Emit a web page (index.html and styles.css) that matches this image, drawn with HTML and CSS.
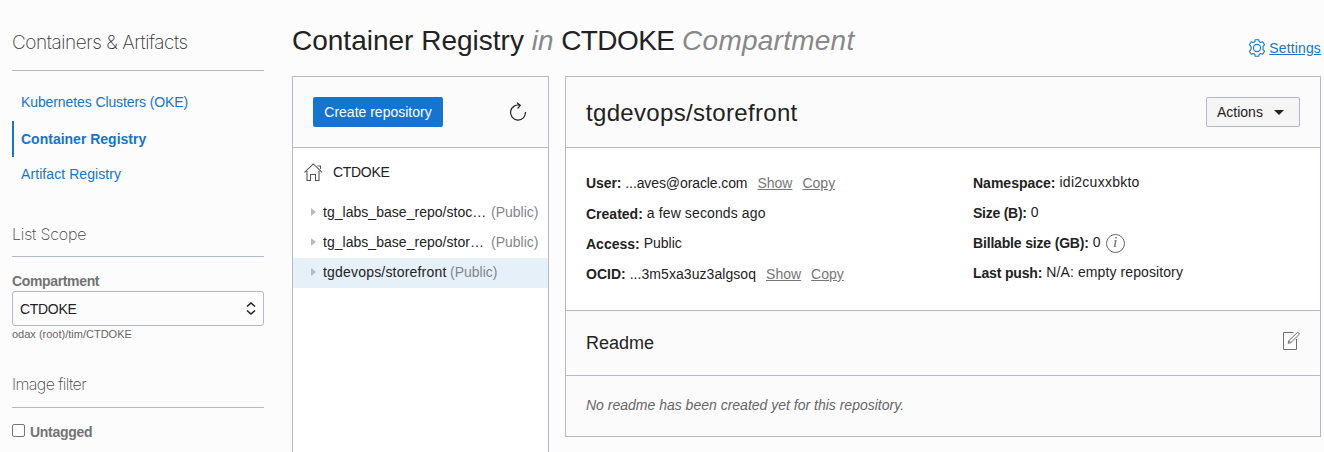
FILE: index.html
```html
<!DOCTYPE html>
<html lang="en">
<head>
<meta charset="utf-8">
<title>Container Registry</title>
<link rel="stylesheet" href="styles.css">
</head>
<body>
<div class="page">
  <aside class="sidebar">
    <h2 class="side-title"><span>Containers &amp; Artifacts</span></h2>
    <nav class="side-nav">
      <a class="side-link first">Kubernetes Clusters (OKE)</a>
      <a class="side-link active"><span>Container Registry</span></a>
      <a class="side-link last">Artifact Registry</a>
    </nav>
    <h3 class="side-heading scope"><span>List Scope</span></h3>
    <label class="field-label">Compartment</label>
    <div class="select"><span>CTDOKE</span>
      <svg width="10" height="16" viewBox="0 0 10 16" fill="none" stroke="#222" stroke-width="1.6"><path d="M1 5.500 5 2 9 5.500M1 9.500 5 13 9 9.500"/></svg>
    </div>
    <div class="hint">odax (root)/tim/CTDOKE</div>
    <h3 class="side-heading filter"><span>Image filter</span></h3>
    <div class="check"><i class="box"></i><span>Untagged</span></div>
  </aside>
  <main class="main">
    <header class="top">
      <h1 class="title"><span>Container Registry</span> <em>in</em> <span class="comp">CTDOKE</span> <em class="compartment">Compartment</em></h1>
      <a class="settings">
        <svg width="18" height="18" viewBox="0 0 18 18" fill="none" stroke="#1474d0" stroke-width="1.1" stroke-linejoin="round"><path d="M7.300.7h3.400l.5 2 1.500.8 2-.7 1.800 3-1.500 1.500v3.400l1.500 1.500-1.800 3-2-.7-1.500.8-.5 2H7.300l-.5-2-1.500-.8-2 .7-1.800-3L3 10.700V7.300L1.500 5.800l1.800-3 2 .7 1.500-.8z"/><circle cx="9" cy="9" r="3.600"/></svg>
        <span>Settings</span>
      </a>
    </header>
    <div class="columns">
      <section class="tree">
        <div class="tree-head">
          <button class="primary"><span>Create repository</span></button>
          <svg width="18" height="20" viewBox="0 0 18 20" fill="none" stroke="#222" stroke-width="1.2"><path d="M16.500 10a7.500 7.500 0 1 1-5.200-6.600M8 .8l3.300 2.600-2.700 3.100"/></svg>
        </div>
        <div class="root">
          <svg width="20" height="19" viewBox="0 0 20 19" fill="none" stroke="#555" stroke-width="1.1"><path d="M.5 9.300 9.300.9l8.800 8.400M3 8v9.500h3.500v-6h5v6H15V8M13.500 3h3v3"/></svg>
          <span>CTDOKE</span>
        </div>
        <ul class="repos">
          <li class="repo"><i class="caret"></i><span class="name">tg_labs_base_repo/stoc…</span><span class="vis">(Public)</span></li>
          <li class="repo"><i class="caret"></i><span class="name">tg_labs_base_repo/stor…</span><span class="vis">(Public)</span></li>
          <li class="repo selected"><i class="caret"></i><span class="name short">tgdevops/storefront</span><span class="vis">(Public)</span></li>
        </ul>
      </section>
      <section class="detail">
        <div class="detail-head">
          <h2 class="repo-title">tgdevops/storefront</h2>
          <button class="actions"><span>Actions</span><i class="down"></i></button>
        </div>
        <div class="facts">
          <dl class="col left">
            <div class="fact user"><dt>User:</dt><dd>...aves@oracle.com</dd><a>Show</a><a>Copy</a></div>
            <div class="fact created"><dt>Created:</dt><dd>a few seconds ago</dd></div>
            <div class="fact"><dt>Access:</dt><dd>Public</dd></div>
            <div class="fact ocid"><dt>OCID:</dt><dd>...3m5xa3uz3algsoq</dd><a>Show</a><a>Copy</a></div>
          </dl>
          <dl class="col right">
            <div class="fact namespace"><dt>Namespace:</dt><dd>idi2cuxxbkto</dd></div>
            <div class="fact size"><dt>Size (B):</dt><dd>0</dd></div>
            <div class="fact billable"><dt>Billable size (GB):</dt><dd>0</dd><b class="info">i</b></div>
            <div class="fact push"><dt>Last push:</dt><dd>N/A: empty repository</dd></div>
          </dl>
        </div>
        <div class="readme-head">
          <h3 class="readme-title">Readme</h3>
          <svg width="18" height="20" viewBox="0 0 18 20" fill="none" stroke="#707070" stroke-width="1"><path d="M10.500 1.500h-10v17h13V8"/><path d="M5.200 12.300l.7-2.700 8.800-8.400 1.800 1.800-8.600 8.600zM5.900 9.600l2 2"/></svg>
        </div>
        <div class="readme-body"><em>No readme has been created yet for this repository.</em></div>
      </section>
    </div>
  </main>
</div>
</body>
</html>
```
FILE: styles.css
```css
* { box-sizing: border-box; }
body {
  margin: 0;
  background: #fcfcfc;
  color: #222;
  font: 14px/20px "Liberation Sans", Arial, sans-serif;
}
h1, h2, h3, dl, dd, ul { margin: 0; padding: 0; font-weight: 400; }
.page { display: flex; height: 452px; overflow: hidden; padding-left: 12px; }
.sidebar { width: 252px; flex: none; }
.side-title {
  height: 71px;
  padding-top: 32px;
  border-bottom: 1px solid #b3b9c6;
  font: 200 19px/22px Inter, sans-serif;
  color: #333;
  letter-spacing: -0.46px;
}
.side-nav { padding-top: 14px; color: #1474d0; }
.side-link { display: flex; align-items: center; height: 36px; padding-left: 9px; }
.side-link.first { padding-bottom: 2px; letter-spacing: -0.1px; }
.side-link.active { border-left: 2px solid #1474d0; padding-left: 7px; font-weight: 700; }
.side-link.last { height: 34px; letter-spacing: 0.08px; }
.side-heading {
  border-bottom: 1px solid #b3b9c6;
  font: 200 16px/20px Inter, sans-serif;
  color: #444;
  letter-spacing: -0.2px;
}
.scope { height: 66px; padding-top: 33px; }
.filter { height: 67px; padding-top: 33px; letter-spacing: -0.6px; }
.field-label { display: block; padding-top: 14px; height: 34px; font-weight: 700; color: #737373; letter-spacing: -0.35px; }
.select {
  display: flex; align-items: center; justify-content: space-between;
  height: 35px; padding: 0 7px;
  letter-spacing: -0.3px;
  border: 1px solid #b3b9c6; border-radius: 3px;
}
.hint { height: 15px; line-height: 17px; font-size: 11px; color: #666; }
.check { display: flex; align-items: center; gap: 5px; padding-top: 14px; font-weight: 700; color: #737373; letter-spacing: -0.3px; }
.box { width: 13px; height: 13px; margin-top: -4px; border: 1px solid #767676; border-radius: 2px; background: #fff; }
.main { width: 1029px; margin-left: 28px; flex: none; }
.top { display: flex; justify-content: space-between; height: 76px; }
.title { padding-top: 24px; font-size: 28px; line-height: 34px; white-space: nowrap; }
.title em { color: #888; }
.title .comp { letter-spacing: -0.6px; }
.title .compartment { letter-spacing: 0.25px; }
.settings { display: flex; gap: 3px; padding-top: 37px; height: 58px; align-items: center; color: #1474d0; }
.settings span { text-decoration: underline; letter-spacing: 0.13px; }
.columns { display: flex; gap: 16px; }
.tree { width: 257px; height: 376px; flex: none; border: 1px solid #b3b9c6; border-bottom: 0; background: #fff; }
.tree-head {
  display: flex; align-items: center; justify-content: space-between;
  height: 71px; padding: 0 21px 0 20px;
  border-bottom: 1px solid #b3b9c6; background: #fbfbfb;
}
button { font: inherit; }
.primary { width: 130px; height: 30px; padding: 0; border: 0; border-radius: 2px; background: #1474d0; color: #fff; }
.root { display: flex; align-items: center; gap: 9px; height: 50px; padding: 0 0 2px 11px; letter-spacing: -0.3px; }
.repos { list-style: none; }
.repo { display: flex; align-items: center; height: 30px; padding-left: 18px; padding-bottom: 2px; white-space: nowrap; }
.selected { background: #e5f0f9; }
.caret { border: 4px solid transparent; border-left: 5px solid #b5bac3; border-right: 0; margin-right: 7px; }
.name { width: 168px; letter-spacing: 0.03px; }
.name.short { width: 127px; letter-spacing: 0.19px; }
.vis { color: #82868c; }
.detail { flex: 1; height: 361px; border: 1px solid #b3b9c6; background: #fbfbfb; }
.detail-head { display: flex; align-items: center; justify-content: space-between; height: 71px; padding: 0 20px; border-bottom: 1px solid #b3b9c6; }
.repo-title { padding-top: 2px; font-size: 24px; line-height: 30px; letter-spacing: 0.32px; }
.actions {
  display: flex; align-items: center; justify-content: space-between;
  width: 94px; height: 30px; padding: 0 15px 0 10px;
  border: 1px solid #b3b9c6; border-radius: 2px; background: #f5f5f5; color: #222;
}
.down { border: 5px solid transparent; border-top-color: #222; border-bottom: 0; }
.facts { display: flex; height: 163px; padding: 20px; background: #fff; border-bottom: 1px solid #b3b9c6; }
.col.left { width: 387px; }
.fact { display: flex; align-items: center; height: 30px; white-space: nowrap; }
.fact dt { font-weight: 700; margin-right: 4px; }
.left .fact dt { padding-top: 2px; }
.fact dd { padding-bottom: 1px; }
.left .fact dd { padding-bottom: 0; }
.fact a { margin-left: 10px; color: #767676; text-decoration: underline; }
.user dt { letter-spacing: -0.1px; }
.user dd { letter-spacing: -0.1px; }
.user dt, .left .user dt { padding-top: 0; }
.created dd { letter-spacing: 0.12px; }
.left .ocid { padding-top: 2px; }
.left .ocid dt { padding-top: 0; }
.ocid dd { letter-spacing: 0.06px; }
.namespace dd { letter-spacing: 0.26px; }
.size dt { letter-spacing: -0.25px; }
.billable dt { letter-spacing: -0.17px; }
.push dt { letter-spacing: -0.15px; }
.push dd { letter-spacing: 0.1px; }
.right .fact dd { padding-bottom: 2px; }
.info {
  width: 19px; height: 19px; margin-left: 5px;
  border: 1px solid #666; border-radius: 50%;
  font: italic 14px/16px "Liberation Serif", serif; text-align: center; color: #555;
}
.readme-head { display: flex; align-items: center; justify-content: space-between; height: 65px; padding: 0 19px 2px 20px; border-bottom: 1px solid #b3b9c6; }
.readme-head svg { margin-top: -2px; }
.readme-title { padding-top: 2px; font-size: 18px; line-height: 24px; }
.readme-body { padding: 19px 20px; color: #666; }
```
